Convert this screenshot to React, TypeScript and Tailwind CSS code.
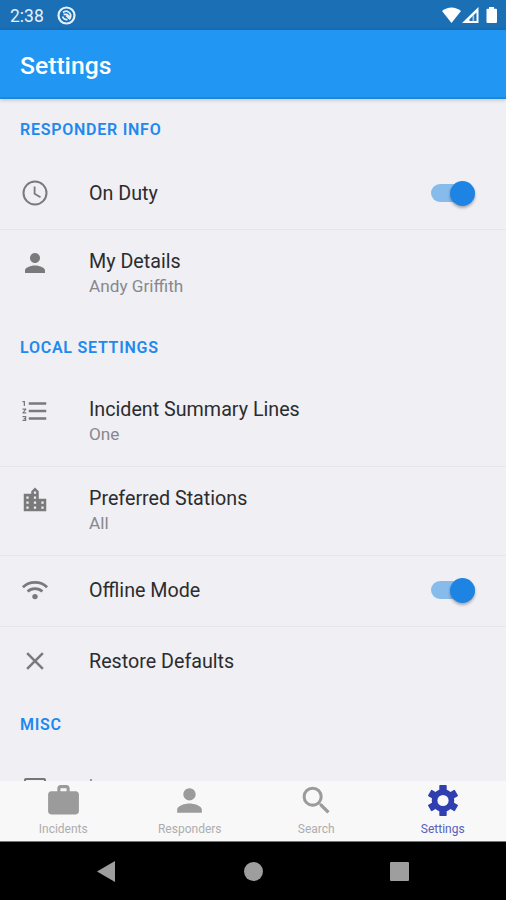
import type { ReactNode } from "react";
import {
  MdClose,
  MdFormatListNumbered,
  MdPerson,
  MdSearch,
  MdWork,
} from "react-icons/md";

function ClockIcon() {
  return (
    <svg width="30" height="30" viewBox="0 0 30 30" fill="none" stroke="currentColor" strokeWidth="2">
      <circle cx="15" cy="15" r="11.5" />
      <path d="M14.600 8.500V15.800L20.500 19.300" strokeWidth="1.8" />
    </svg>
  );
}

function CityIcon() {
  return (
    <svg width="30" height="30" viewBox="0 0 24 24" fill="currentColor">
      <path
        fillRule="evenodd"
        d="M15 11V5l-3-3-3 3v2H3v14h18V11ZM5.100 9.100v1.800h1.800V9.100ZM5.100 13.100v1.800h1.800v-1.800ZM5.100 17.100v1.800h1.800v-1.800ZM11.100 5.100v1.800h1.800V5.100ZM11.100 9.100v1.800h1.800V9.100ZM11.100 13.100v1.800h1.800v-1.800ZM11.100 17.100v1.800h1.800v-1.800ZM17.100 13.100v1.800h1.800v-1.800ZM17.100 17.100v1.800h1.800v-1.800Z"
      />
    </svg>
  );
}

function GearIcon() {
  return (
    <svg width="37" height="37" viewBox="-19 -18.500 37 37">
      <g fill="currentColor">
        <circle r="11.200" />
        <rect x="-3.700" y="-15.500" width="7.400" height="31" rx="0.800" />
        <rect x="-3.700" y="-15.500" width="7.400" height="31" rx="0.800" transform="rotate(60)" />
        <rect x="-3.700" y="-15.500" width="7.400" height="31" rx="0.800" transform="rotate(120)" />
      </g>
      <circle r="5.600" fill="#f8f8f8" />
    </svg>
  );
}

function WifiIcon() {
  return (
    <svg width="30" height="30" viewBox="0 0 30 30" fill="none" stroke="currentColor" strokeWidth="2.7">
      <path d="M2.9 12.2C9.5 5.7 20.5 5.7 27.1 12.2" />
      <path d="M7.6 16.6C11.7 12.7 18.3 12.7 22.4 16.6" />
      <circle cx="15" cy="21.6" r="2.7" fill="currentColor" stroke="none" />
    </svg>
  );
}

function StatusBar() {
  return (
    <div className="flex h-[30px] items-center bg-[#1a6fb5] pl-[10px] pr-[8px] text-[#e6f1fb]">
      <span className="w-[47px] pt-px text-[17.5px] leading-[30px]">2:38</span>
      <svg width="19" height="19" viewBox="0 0 19 19" fill="none" stroke="currentColor">
        <circle cx="9.5" cy="9.5" r="8" strokeWidth="2.2" />
        <path d="M5.600 10.500A4 4 0 0 0 10.500 13.400" strokeWidth="1.700" />
        <path d="M6 6.500A4.600 4.600 0 0 1 13.400 11.500L9.800 8.300H6.600" strokeWidth="1.700" />
        <path d="M9 9.500L13.200 13.400" strokeWidth="1.700" />
      </svg>
      <svg className="ml-auto" width="56" height="18" viewBox="0 0 56 18" fill="white">
        <path d="M0 5C5.5 .2 13.500 .2 19 5L9.500 17Z" />
        <path fillRule="evenodd" d="M20 17L36.500 1V17ZM27.500 15H34.500V6.500L27.500 13.200Z" />
        <path d="M30.500 15V10.500L32.200 9V15Z" opacity="0.6" />
        <path d="M47 1h5v1.800h2a1 1 0 0 1 1 1V16a1 1 0 0 1-1 1h-8.500a1 1 0 0 1-1-1V3.800a1 1 0 0 1 1-1H47Z" />
      </svg>
    </div>
  );
}

function Toggle() {
  return (
    <div className="ml-auto mr-[31px] flex h-[18px] w-[44px] items-center justify-end rounded-full bg-[#86bbec]">
      <div className="size-[25px] shrink-0 rounded-full bg-[#1e84e3] shadow-[0_2px_3px_rgba(0,0,0,0.3)]" />
    </div>
  );
}

function SectionHeader({ children, className }: { children: ReactNode; className: string }) {
  return (
    <h2 className={`flex shrink-0 items-center pl-5 text-[16px] font-semibold tracking-[0.75px] text-[#2089ee] ${className}`}>
      {children}
    </h2>
  );
}

function Row({ icon, title, detail, toggle, divider }: {
  icon: ReactNode;
  title: string;
  detail?: string;
  toggle?: boolean;
  divider?: boolean;
}) {
  return (
    <div
      className={`flex shrink-0 border-b pl-5 ${detail ? "h-[89px] pt-[18px]" : "h-[71px] items-center pb-[2px]"} ${divider ? "border-[#e5e5ea]" : "border-transparent"}`}
    >
      <div className="flex h-[30px] w-[69px] items-center text-[#7a7a7c]">{icon}</div>
      <div className="pt-px">
        <div className="text-[19.7px] leading-[26px] text-[#2c2c2e]">{title}</div>
        {detail && <div className="-mt-px text-[17.2px] leading-[25px] text-[#88888b]">{detail}</div>}
      </div>
      {toggle && <Toggle />}
    </div>
  );
}

function Tab({ icon, label, active }: { icon: ReactNode; label: string; active?: boolean }) {
  return (
    <div className={`flex flex-1 flex-col items-center pt-[1px] ${active ? "text-[#303fb0]" : "text-[#9b9b9b]"}`}>
      {icon}
      <span className={`mt-[2px] text-[12px] leading-[16px] ${active ? "text-[#5560be]" : "text-[#adadad]"}`}>{label}</span>
    </div>
  );
}

export default function App() {
  return (
    <div className="flex h-[900px] w-[506px] flex-col overflow-hidden bg-[#efeff4] font-['Roboto',sans-serif]">
      <StatusBar />
      <header className="flex h-[69px] shrink-0 items-center border-b-2 border-[#1d87dc] bg-[#2196f3] pl-5 pt-[4px] shadow-[0_1px_4px_rgba(0,0,0,0.2)]">
        <h1 className="text-[24.7px] font-medium text-white">Settings</h1>
      </header>
      <main className="flex h-[682px] shrink-0 flex-col overflow-hidden">
        <SectionHeader className="h-[60px] pt-px">RESPONDER INFO</SectionHeader>
        <Row icon={<ClockIcon />} title="On Duty" toggle divider />
        <Row icon={<MdPerson size={30} />} title="My Details" detail="Andy Griffith" />
        <SectionHeader className="h-[59px] pb-[2px]">LOCAL SETTINGS</SectionHeader>
        <Row icon={<MdFormatListNumbered size={30} />} title="Incident Summary Lines" detail="One" divider />
        <Row icon={<CityIcon />} title="Preferred Stations" detail="All" divider />
        <Row icon={<WifiIcon />} title="Offline Mode" toggle divider />
        <Row icon={<MdClose size={30} />} title="Restore Defaults" />
        <SectionHeader className="h-[55px] pb-[2px]">MISC</SectionHeader>
        <div className="flex shrink-0 items-start pl-[24px] pt-[25px]">
          <div className="h-5 w-[22px] rounded-[2px] border-2 border-[#757577]" />
          <div className="ml-[44px] mt-px h-4 w-[2px] bg-[#9a9a9d]" />
        </div>
      </main>
      <nav className="flex h-[61px] shrink-0 border-b border-[#777777] bg-[#f8f8f8]">
        <Tab icon={<MdWork size={37} />} label="Incidents" />
        <Tab icon={<MdPerson size={37} />} label="Responders" />
        <Tab icon={<MdSearch size={37} />} label="Search" />
        <Tab icon={<GearIcon />} label="Settings" active />
      </nav>
      <div className="flex flex-1 items-center bg-black pl-[97px] text-[#9e9e9e]">
        <svg width="18" height="21" viewBox="0 0 18 21" fill="currentColor">
          <path d="M0 10.500L18 0V21Z" />
        </svg>
        <div className="ml-[129px] size-[19px] rounded-full bg-[#9e9e9e]" />
        <div className="ml-[127px] size-[19px] rounded-[1px] bg-[#9e9e9e]" />
      </div>
    </div>
  );
}
